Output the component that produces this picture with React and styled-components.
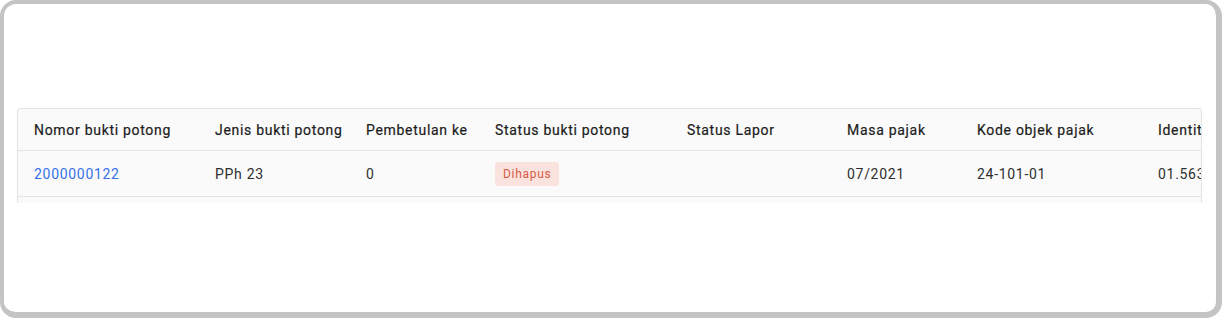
import React from "react";
import styled, { createGlobalStyle } from "styled-components";

const Global = createGlobalStyle`
  html, body { margin: 0; padding: 0; background: #ffffff; }
  body { font-family: Roboto, "Noto Sans", sans-serif; }
  * { box-sizing: border-box; }
`;

const Frame = styled.div`
  width: 1222px;
  height: 318px;
  border-style: solid;
  border-color: #c4c4c4;
  border-width: 4px 6px 6px 4px;
  border-radius: 16px;
  background: #ffffff;
  padding: 104px 14px 0 13px;
`;

const TableWrap = styled.div`
  width: 1185px;
  height: 95px;
  overflow: hidden;
  border: 1px solid #e3e3e3;
  border-bottom: none;
  border-radius: 4px 4px 0 0;
  background: #fafafa;
`;

const Table = styled.div`
  display: grid;
  grid-template-columns: 181px 151px 129px 192px 160px 130px 181px 200px;
  width: max-content;
`;

const HeadCell = styled.div`
  height: 42px;
  padding: 0 16px;
  display: flex;
  align-items: center;
  font-size: 14px;
  font-weight: 400;
  letter-spacing: 0.7px;
  color: #1c1c1c;
  -webkit-text-stroke: 0.2px #1c1c1c;
  white-space: nowrap;
  border-bottom: 1px solid #e3e3e3;
`;

const Cell = styled.div`
  height: 46px;
  padding: 0 16px;
  display: flex;
  align-items: center;
  font-size: 14px;
  letter-spacing: 0.7px;
  color: ${(p) => (p.$link ? "#3771e8" : "#2e2e2e")};
  white-space: nowrap;
  border-bottom: 1px solid #e3e3e3;
`;

const Badge = styled.span`
  display: inline-flex;
  align-items: center;
  justify-content: center;
  height: 24px;
  padding: 0 8px;
  border-radius: 3px;
  background: #fae3df;
  color: #d85a45;
  font-size: 12px;
  letter-spacing: 0.7px;
`;

const headers = [
  "Nomor bukti potong",
  "Jenis bukti potong",
  "Pembetulan ke",
  "Status bukti potong",
  "Status Lapor",
  "Masa pajak",
  "Kode objek pajak",
  "Identitas",
];

export default function App() {
  return (
    <>
      <Global />
      <Frame>
        <TableWrap>
          <Table>
            {headers.map((h) => (
              <HeadCell key={h}>{h}</HeadCell>
            ))}
            <Cell $link>2000000122</Cell>
            <Cell>PPh 23</Cell>
            <Cell>0</Cell>
            <Cell>
              <Badge>Dihapus</Badge>
            </Cell>
            <Cell />
            <Cell>07/2021</Cell>
            <Cell>24-101-01</Cell>
            <Cell>01.563.123.4-567.000</Cell>
          </Table>
        </TableWrap>
      </Frame>
    </>
  );
}
